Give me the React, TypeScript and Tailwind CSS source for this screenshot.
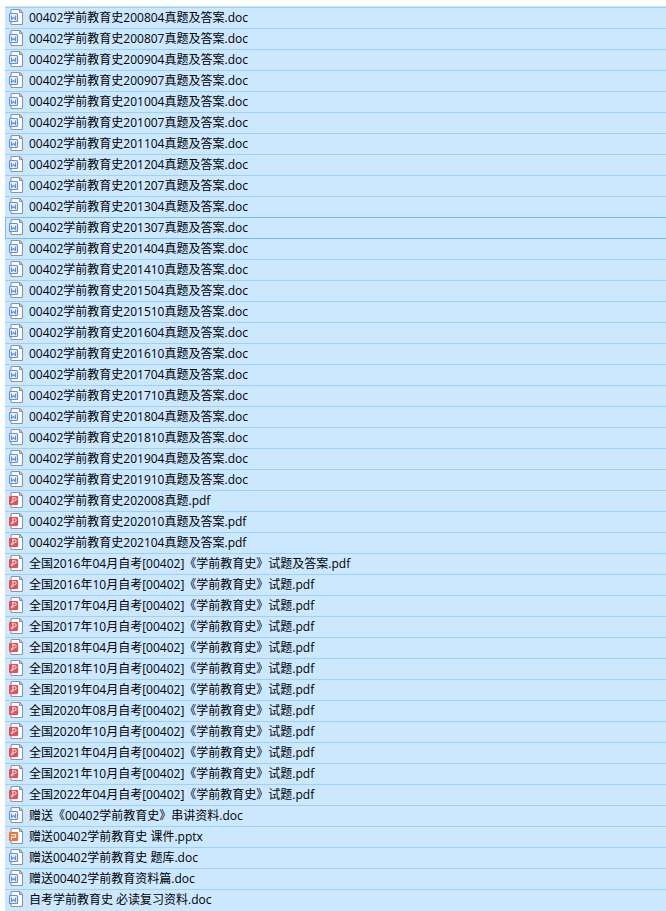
type FileKind = 'doc' | 'pdf' | 'pptx';

const docDates = [
  '200804', '200807', '200904', '200907', '201004', '201007', '201104', '201204',
  '201207', '201304', '201307', '201404', '201410', '201504', '201510', '201604',
  '201610', '201704', '201710', '201804', '201810', '201904', '201910',
];

const paperDates = [
  '2016年10月', '2017年04月', '2017年10月', '2018年04月', '2018年10月', '2019年04月',
  '2020年08月', '2020年10月', '2021年04月', '2021年10月', '2022年04月',
];

const files = [
  ...docDates.map((date) => `00402学前教育史${date}真题及答案.doc`),
  '00402学前教育史202008真题.pdf',
  '00402学前教育史202010真题及答案.pdf',
  '00402学前教育史202104真题及答案.pdf',
  '全国2016年04月自考[00402]《学前教育史》试题及答案.pdf',
  ...paperDates.map((date) => `全国${date}自考[00402]《学前教育史》试题.pdf`),
  '赠送《00402学前教育史》串讲资料.doc',
  '赠送00402学前教育史 课件.pptx',
  '赠送00402学前教育史 题库.doc',
  '赠送00402学前教育资料篇.doc',
  '自考学前教育史 必读复习资料.doc',
];

const focused = files.indexOf('00402学前教育史201307真题及答案.doc');

// The focused row shares its bottom line with the top of the next one
function rowClass(index: number) {
  if (index === focused) return 'border-t border-l border-[#70bfff] pl-[3px]';
  if (index === focused + 1) return 'border-t border-[#70bfff] pl-1';
  return 'border-t border-[#99d1ff] pl-1';
}

function FileIcon({ kind }: { kind: FileKind }) {
  return (
    <svg className="mb-0.5 h-4 w-4 shrink-0" viewBox="0 0 16 16" fill="none" aria-hidden="true">
      <path
        d="M3 .5h7.5l3 3v11a1 1 0 0 1-1 1H3a1 1 0 0 1-1-1v-13a1 1 0 0 1 1-1z"
        fill="#fff"
        stroke="#8c959f"
        strokeWidth="1.1"
      />
      <path d="M10.5 1v2.5h3" stroke="#8c959f" />
      {kind === 'doc' && (
        <>
          <rect x=".5" y="4.5" width="8" height="8" rx="1" fill="#f3f7ff" stroke="#5b8eee" strokeWidth="1.2" />
          <path d="M2.5 6.5v4l2-2 2 2v-4" stroke="#5b8eee" strokeWidth="1.1" />
        </>
      )}
      {kind === 'pdf' && (
        <>
          <rect y="4" width="9" height="9" rx="1" fill="#ee4c52" />
          <path
            d="M3 5.7h2.6a1.5 1.5 0 0 1 0 3.1c-1.9 0-3.4.6-3.4 1.5 0 1 1.7.9 1.7-.6V6"
            stroke="#fff"
            strokeWidth=".9"
          />
        </>
      )}
      {kind === 'pptx' && (
        <>
          <rect y="4" width="9" height="9" rx="1" fill="#f96f35" />
          <path d="M2 6.5h4.6v2.6H2.5v2.3" stroke="#fff" strokeWidth="1.1" />
        </>
      )}
    </svg>
  );
}

export default function App() {
  return (
    <main className="min-h-screen bg-white pt-1.5 pl-[5px] font-['Open_Sans','Noto_Sans_CJK_SC',sans-serif] text-xs text-black">
      <ul className="bg-[#cce8ff] py-px">
        {files.map((name, index) => (
          <li key={name} className={`flex h-[21px] items-center gap-1 ${rowClass(index)}`}>
            <FileIcon kind={name.split('.').pop() as FileKind} />
            <span className="whitespace-nowrap">{name}</span>
          </li>
        ))}
      </ul>
    </main>
  );
}
